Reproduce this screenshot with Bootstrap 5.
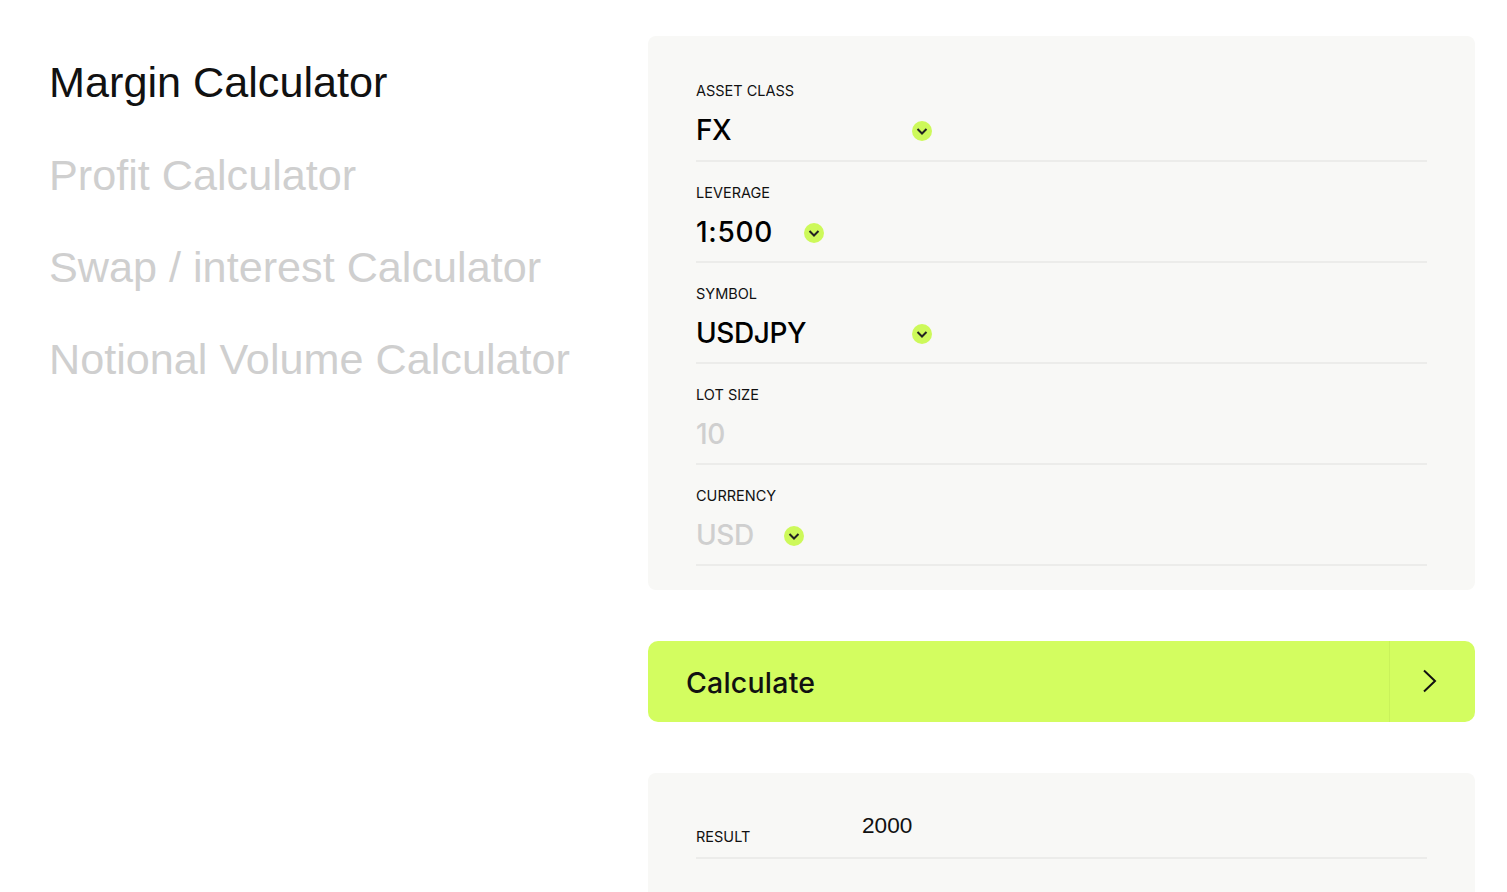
<!DOCTYPE html>
<html lang="en">
<head>
<meta charset="utf-8">
<title>Margin Calculator</title>
<link href="https://cdn.jsdelivr.net/npm/bootstrap@5.3.0/dist/css/bootstrap.min.css" rel="stylesheet">
<style>
html,body{overflow:hidden;height:892px;background:#fff}
body{font-family:"Liberation Sans",Arial,sans-serif;color:#111}
.calc-page{height:892px;overflow:hidden;padding:36px 32px 0 49px;gap:79px}
.calc-side{width:520px;flex:none}
.calc-tab{display:block;font-size:43.2px;line-height:92px;height:92px;color:#cfcfcf;text-decoration:none;white-space:nowrap}
.calc-tab:first-child{height:93px;color:#111}
.calc-main{flex:1 1 auto;min-width:0}
.calc-panel{background:#f8f8f6;border-radius:8px;padding:46px 48px 24px}
.calc-field{height:101px;border-bottom:2px solid #ececea;padding-top:22px}
.calc-field:first-child{height:80px;padding-top:0}
.calc-label{font-family:Inter,"Liberation Sans",sans-serif;font-size:14.5px;line-height:17px;color:#111;display:block}
.calc-val{font-family:Inter,"Liberation Sans",sans-serif;font-size:28px;font-weight:500;line-height:34px;margin-top:14px;color:#000;letter-spacing:-.4px}
.calc-val.is-off{color:#cfcfcf}
.calc-select{width:236px}
.calc-gap{gap:31px}
.calc-gap-off{gap:30px}
.calc-wide{letter-spacing:.7px}
.calc-chev{width:20px;height:20px;flex:none;display:block;margin-top:2px}
.calc-go{height:81px;margin:51px 0;background:#d3fd60;border:0;border-radius:10px;width:100%;padding:0;color:#111}
.calc-go-text{font-family:Inter,"Liberation Sans",sans-serif;font-size:28.5px;font-weight:500;padding:4px 0 0 38px;letter-spacing:.2px}
.calc-go-arrow{width:86px;height:100%;border-left:1px solid #c9f25a;padding:0 6px 2px 0}
.calc-result{padding-top:36px;height:300px}
.calc-res-row{border-bottom:2px solid #ececea;height:50px}
.calc-res-label{width:166px;font-family:Inter,"Liberation Sans",sans-serif;font-size:14.5px;line-height:17px;padding-bottom:12px}
.calc-res-val{font-size:22.6px;line-height:28px;padding-bottom:17px}
</style>
</head>
<body>
<div class="calc-page d-flex align-items-start">
  <nav class="calc-side d-flex flex-column">
    <a class="calc-tab" href="#">Margin Calculator</a>
    <a class="calc-tab" href="#">Profit Calculator</a>
    <a class="calc-tab" href="#">Swap / interest Calculator</a>
    <a class="calc-tab" href="#">Notional Volume Calculator</a>
  </nav>
  <main class="calc-main">
    <section class="calc-panel">
      <div class="calc-field">
        <span class="calc-label">ASSET CLASS</span>
        <div class="calc-val calc-select d-flex align-items-center justify-content-between"><span>FX</span>
          <svg class="calc-chev" viewBox="0 0 20 20"><circle cx="10" cy="10" r="10" fill="#cdf95a"/><path d="M5.500 8 10 12.500 14.500 8" fill="none" stroke="#222" stroke-width="2"/></svg></div>
      </div>
      <div class="calc-field">
        <span class="calc-label">LEVERAGE</span>
        <div class="calc-val calc-gap d-flex align-items-center"><span class="calc-wide">1:500</span>
          <svg class="calc-chev" viewBox="0 0 20 20"><circle cx="10" cy="10" r="10" fill="#cdf95a"/><path d="M5.500 8 10 12.500 14.500 8" fill="none" stroke="#222" stroke-width="2"/></svg></div>
      </div>
      <div class="calc-field">
        <span class="calc-label">SYMBOL</span>
        <div class="calc-val calc-select d-flex align-items-center justify-content-between"><span>USDJPY</span>
          <svg class="calc-chev" viewBox="0 0 20 20"><circle cx="10" cy="10" r="10" fill="#cdf95a"/><path d="M5.500 8 10 12.500 14.500 8" fill="none" stroke="#222" stroke-width="2"/></svg></div>
      </div>
      <div class="calc-field">
        <span class="calc-label">LOT SIZE</span>
        <div class="calc-val is-off">10</div>
      </div>
      <div class="calc-field">
        <span class="calc-label">CURRENCY</span>
        <div class="calc-val is-off calc-gap-off d-flex align-items-center"><span>USD</span>
          <svg class="calc-chev" viewBox="0 0 20 20"><circle cx="10" cy="10" r="10" fill="#cdf95a"/><path d="M5.500 8 10 12.500 14.500 8" fill="none" stroke="#222" stroke-width="2"/></svg></div>
      </div>
    </section>
    <button class="calc-go d-flex align-items-center justify-content-between" type="button">
      <span class="calc-go-text">Calculate</span>
      <span class="calc-go-arrow d-flex align-items-center justify-content-center">
        <svg width="15" height="24" viewBox="0 0 15 24"><path d="M2 1.500 13 12 2 22.500" fill="none" stroke="#111" stroke-width="2"/></svg>
      </span>
    </button>
    <section class="calc-panel calc-result">
      <div class="calc-res-row d-flex align-items-end">
        <span class="calc-res-label">RESULT</span>
        <span class="calc-res-val">2000</span>
      </div>
    </section>
  </main>
</div>
<script src="https://cdn.jsdelivr.net/npm/bootstrap@5.3.0/dist/js/bootstrap.bundle.min.js"></script>
</body>
</html>
